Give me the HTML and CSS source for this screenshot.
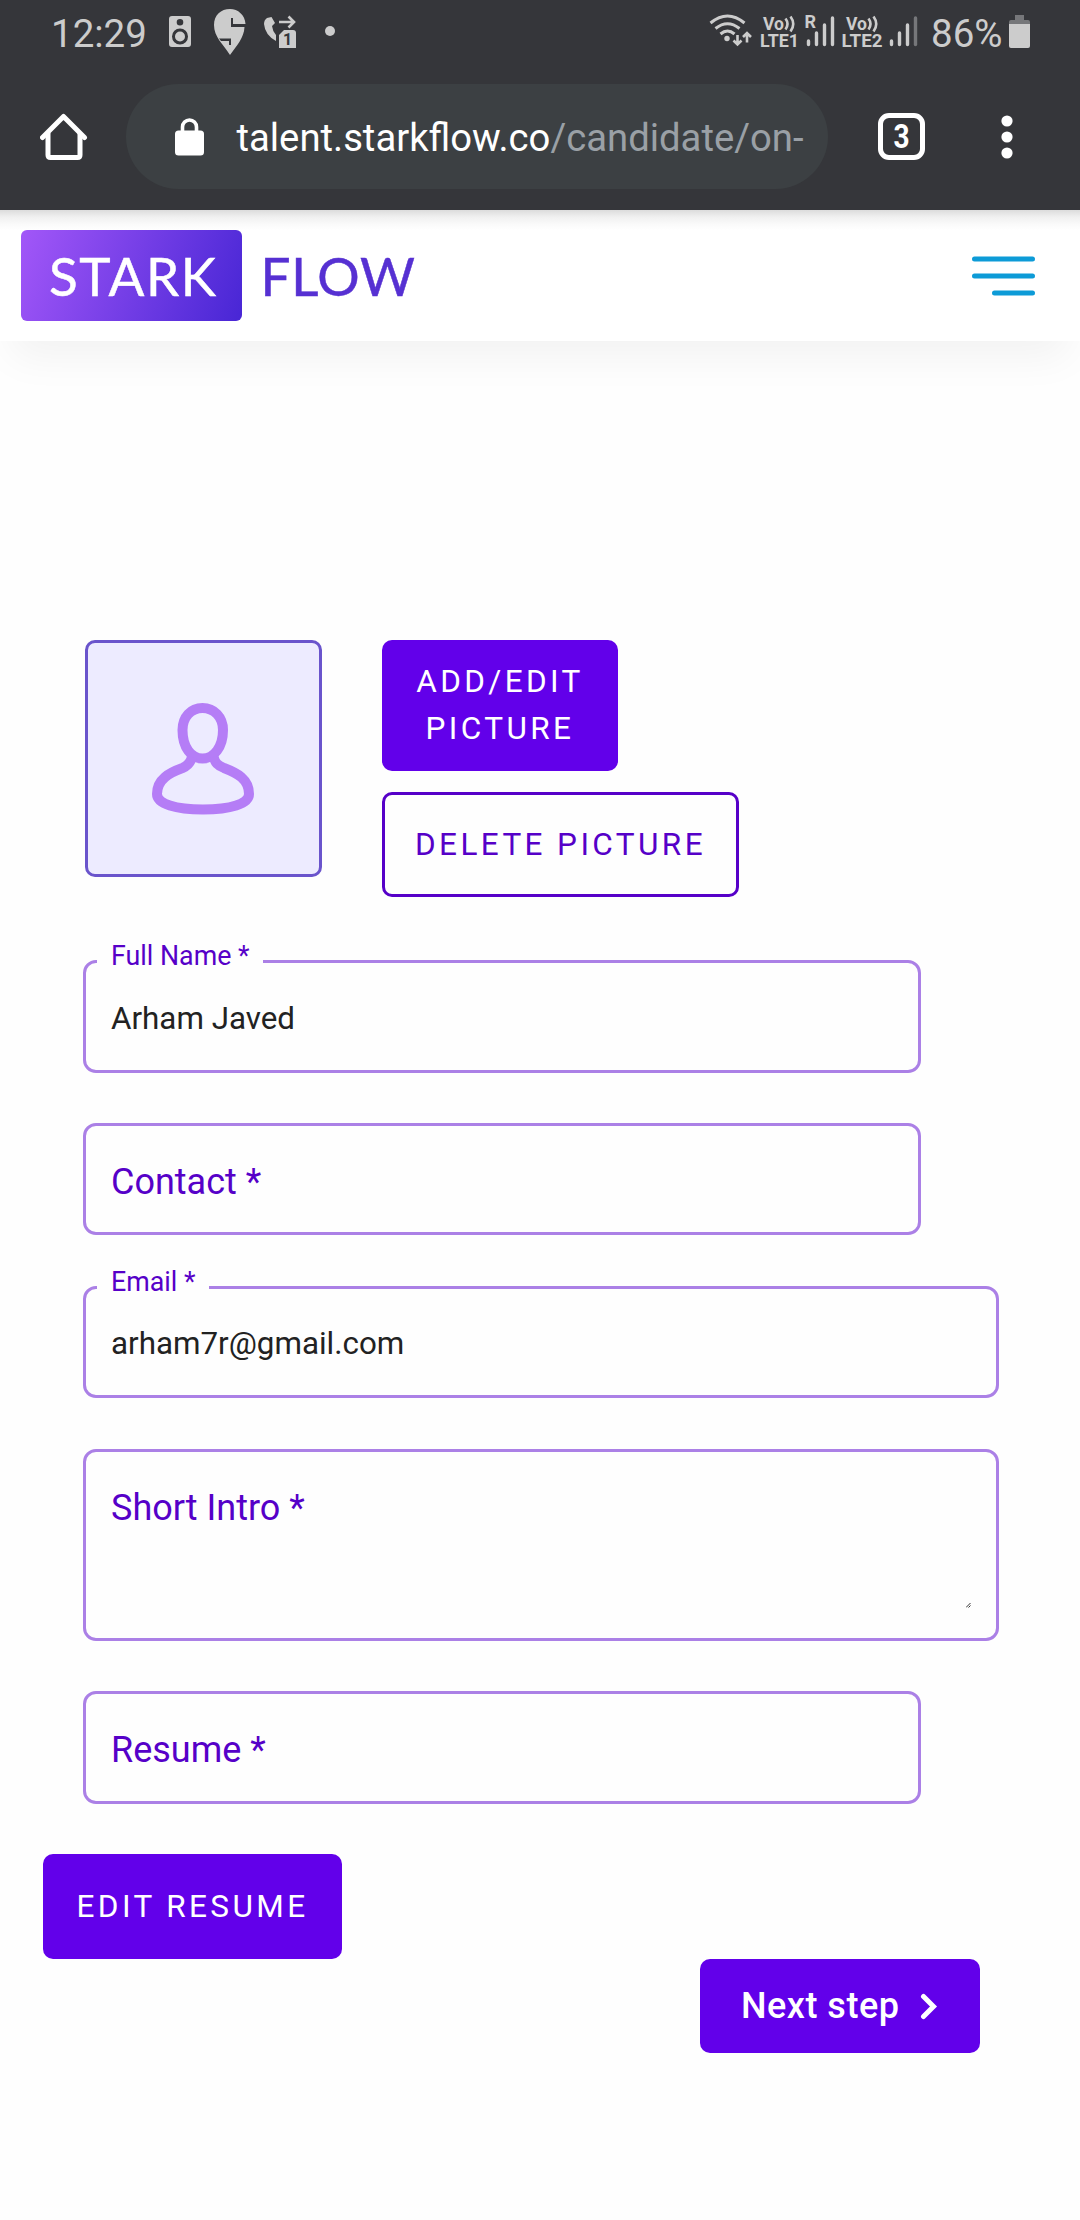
FILE: index.html
```html
<!DOCTYPE html>
<html lang="en">
<head>
<meta charset="utf-8">
<title>Starkflow</title>
<link rel="stylesheet" href="styles.css">
</head>
<body>
<header class="chrome">
  <div class="status">
    <span class="clock">12:29</span>
    <svg class="status-left" width="180" height="66" viewBox="160 0 180 66" fill="#ccc">
      <path fill-rule="evenodd" d="M172 16h16q3 0 3 3v25q0 3-3 3h-16q-3 0-3-3v-25q0-3 3-3zM180 19a3.300 3.300 0 1 0 0 6.600a3.300 3.300 0 1 0 0-6.600zM180 28.500a8 8 0 1 0 0 16a8 8 0 1 0 0-16z"/>
      <circle cx="180" cy="36.500" r="5"/>
      <path d="M230 55C223 44 214 37 214 25C214 15 221 9 230 9C238 9 245 15 245.500 24H233V18H231V27H244.500C244 38 237 45 230 55z"/>
      <path d="M219 38.500H231V45H229V41H221z" fill="#35363a"/>
      <path d="M267 18L271.500 17L275 23L272 26Q272.500 31 276 35V41Q265 35 264 24Q264 20 267 18z"/>
      <path d="M279 22H293M288.500 16.500L294 22L288.500 27.500" fill="none" stroke="#ccc" stroke-width="2.600"/>
      <path d="M284 30H293Q296 30 296 33V48H279V35z"/>
      <text x="287.500" y="45" class="sim" text-anchor="middle">1</text>
      <circle cx="330" cy="31" r="5"/>
    </svg>
    <svg class="status-right" width="220" height="66" viewBox="705 0 220 66" fill="#ccc">
      <g fill="none" stroke="#ccc" stroke-width="3">
        <path d="M710.500 23Q727.500 9 744.500 23M715.500 28.500Q727.500 19 739.500 28.500M720.500 34Q727.500 28 734.500 34"/>
        <path d="M737.500 35V44M733.500 40.500L737.500 44.500L741.500 40.500M747 42.500V33.500M743 37L747 33L751 37" stroke-width="2.600"/>
      </g>
      <circle cx="727" cy="38.500" r="2.700"/>
      <g class="lte">
        <text x="763" y="29.500" textLength="21" lengthAdjust="spacingAndGlyphs">Vo</text><text x="760" y="47" textLength="39" lengthAdjust="spacingAndGlyphs">LTE1</text>
        <text x="804.500" y="28">R</text>
        <text x="846" y="29.500" textLength="21" lengthAdjust="spacingAndGlyphs">Vo</text><text x="841.500" y="47" textLength="41" lengthAdjust="spacingAndGlyphs">LTE2</text>
      </g>
      <path d="M785.500 18.500Q789.500 24 785.500 29.500M790.500 16.500Q796 24 790.500 31.500M868.500 18.500Q872.500 24 868.500 29.500M873.500 16.500Q879 24 873.500 31.500" fill="none" stroke="#ccc" stroke-width="2.600"/>
      <path d="M808.500 41V44.500M816.500 33V44.500M824.500 25V44.500M832.500 18V44.500M891.500 41V44.500M899.500 33V44.500M907.500 25V44.500" stroke="#ccc" stroke-width="3.400" stroke-linecap="round"/>
      <path d="M915.500 18V44.500" stroke="#76777a" stroke-width="3.400" stroke-linecap="round"/>
    </svg>
    <span class="battery-text">86%</span>
    <svg class="battery" width="21" height="66" viewBox="0 0 21 66"><path d="M6 15h9v5h4q2 0 2 2v2H0v-2q0-2 2-2h4z" fill="#76777a"/><path d="M0 24h21v22q0 2-2 2H2q-2 0-2-2z" fill="#ccc"/></svg>
  </div>
  <div class="toolbar">
    <svg class="home" width="48" height="48" viewBox="0 0 48 48" fill="none" stroke="#fff" stroke-width="5" stroke-linejoin="round"><path d="M8 20V42q0 2.500 2.500 2.500h27q2.500 0 2.500-2.500V20"/><path d="M2.500 24.500L23.500 3.500L44.500 24.500" stroke-linecap="round"/></svg>
    <div class="url">
      <svg width="29" height="38" viewBox="0 0 29 38"><rect y="12.500" width="29" height="25" rx="3.500" fill="#fff"/><path d="M7.500 14V9a7 7 0 0 1 14 0V14" fill="none" stroke="#fff" stroke-width="3.600"/></svg>
      <span class="address">talent.starkflow.co<span class="path">/candidate/on-</span></span>
    </div>
    <span class="tabs"><span class="count">3</span></span>
    <svg class="dots" width="12" height="44" viewBox="0 0 12 44" fill="#fff"><circle cx="6" cy="6" r="5.600"/><circle cx="6" cy="22" r="5.600"/><circle cx="6" cy="38" r="5.600"/></svg>
  </div>
</header>
<nav class="nav">
  <div class="logo"><span class="stark">STARK</span><span class="flow">FLOW</span></div>
  <svg class="burger" width="63" height="40" viewBox="0 0 63 40" stroke="#0d9bd7" stroke-width="5" stroke-linecap="round"><path d="M2.500 3H60.500M2.500 20H60.500M22.500 37H60.500"/></svg>
</nav>
<main class="page">
  <section class="picture">
    <div class="avatar">
      <svg width="102" height="112" viewBox="0 0 102 112" fill="none" stroke="#b57df6" stroke-width="10"><path d="M50.500 5C62 5 71 14 71 27C71 44 62 55.500 50.500 55.500C39 55.500 30.500 44 30.500 27C30.500 14 39 5 50.500 5z"/><path d="M40 54Q38 62 30.500 65C18 69.500 5 76 5 91C5 101 24 106.500 51 106.500C78 106.500 97 101 97 91C97 76 85 70 72 65C65 62 63.500 60 61.500 54"/></svg>
    </div>
    <div class="actions">
      <button class="btn add">ADD/EDIT<br>PICTURE</button>
      <button class="btn outline">DELETE PICTURE</button>
    </div>
  </section>
  <form class="form">
    <div class="field narrow"><label class="notch">Full Name *</label><span class="value">Arham Javed</span></div>
    <div class="field narrow contact"><label class="placeholder">Contact *</label></div>
    <div class="field email"><label class="notch">Email *</label><span class="value">arham7r@gmail.com</span></div>
    <div class="field intro"><label class="placeholder">Short Intro *</label><svg class="grip" width="5" height="5" viewBox="0 0 5 5" stroke="#333" stroke-width="1"><path d="M0 4.500L4.500 0M2.500 4.500L4.500 2.500"/></svg></div>
    <div class="field narrow resume"><label class="placeholder">Resume *</label></div>
  </form>
  <button class="btn edit">EDIT RESUME</button>
  <button class="next">Next step<svg width="18" height="27" viewBox="0 0 18 27" fill="none" stroke="#fff" stroke-width="5" stroke-linecap="round"><path d="M3.500 3.500L13.500 13.500L3.500 23.500"/></svg></button>
</main>
</body>
</html>
```
FILE: styles.css
```css
* { box-sizing: border-box; }
body {
  margin: 0;
  width: 1080px;
  height: 2220px;
  overflow: hidden;
  background: #fefefe;
  font-family: Roboto, "Liberation Sans", sans-serif;
}
svg { display: block; flex: none; }

.chrome { height: 210px; background: #35363a; }
.status { display: flex; height: 66px; color: #ccc; font-size: 38.500px; line-height: 68px; white-space: nowrap; }
.clock { width: 109px; margin-left: 51px; }
.status-right { margin-left: 365px; }
.battery-text { width: 78px; margin-left: 6px; }
.sim { font-size: 16px; font-weight: 700; fill: #35363a; }
.lte { font-size: 18px; font-weight: 700; }

.toolbar { display: flex; align-items: center; height: 141px; }
.home { margin-left: 39.500px; }
.url {
  display: flex;
  align-items: center;
  width: 702px;
  height: 105px;
  margin-left: 38px;
  padding-left: 49px;
  border-radius: 53px;
  background: #3c4043;
}
.address { margin-left: 33px; padding-top: 3px; color: #fff; font-size: 38.250px; white-space: nowrap; }
.path { color: #9aa0a6; }
.tabs {
  display: flex;
  align-items: center;
  justify-content: center;
  width: 47px;
  height: 47px;
  margin-left: 50px;
  border: 5px solid #fff;
  border-radius: 11px;
  color: #fff;
  font-size: 33px;
  font-weight: 700;
  line-height: 37px;
}
.count { transform: scaleX(.85); }
.dots { margin-left: 76px; }

.nav {
  display: flex;
  align-items: center;
  justify-content: space-between;
  height: 131px;
  padding: 0 45px 0 21px;
  background: linear-gradient(#dcdcdc, #f0f0f0 7px, #fafafa 14px, #fff 20px);
  box-shadow: 0 28px 42px -12px rgba(0, 0, 0, .05);
}
.logo {
  display: flex;
  align-items: center;
  font-family: Lato, sans-serif;
  font-size: 53px;
  line-height: 92px;
  letter-spacing: 1.600px;
  white-space: nowrap;
  -webkit-text-stroke: .5px currentColor;
}
.stark {
  width: 221px;
  height: 91px;
  padding-left: 28px;
  border-radius: 6px;
  background: linear-gradient(110deg, #a257f8, #4826d5);
  color: #fff;
}
.flow { margin-left: 18.500px; color: #5630d2; letter-spacing: .7px; }

.page { display: flex; flex-direction: column; padding-top: 299px; }
.picture { display: flex; gap: 60px; height: 320px; padding-left: 85px; }
.avatar {
  display: flex;
  align-items: center;
  justify-content: center;
  width: 237px;
  height: 237px;
  padding-right: 2px;
  border: 3px solid #6a54cc;
  border-radius: 10px;
  background: #edebff;
}
.actions { display: flex; flex-direction: column; align-items: flex-start; gap: 21px; }
.btn {
  margin: 0;
  padding: 0;
  border: 0;
  border-radius: 10px;
  background: #6200ea;
  color: #fff;
  font-family: inherit;
  font-size: 31.500px;
  line-height: 47px;
  letter-spacing: 3.400px;
}
.add { width: 236px; height: 131px; padding-bottom: 2px; }
.outline { width: 357px; height: 105px; border: 3px solid #5600c8; background: transparent; color: #5600c8; }

.form { display: flex; flex-direction: column; padding-left: 83px; }
.field {
  display: flex;
  align-items: center;
  position: relative;
  width: 916px;
  height: 113px;
  padding-left: 25px;
  border: 3px solid #ab80e6;
  border-radius: 13px;
}
.narrow { width: 838px; }
.contact { height: 112px; margin-top: 50px; }
.email { height: 112px; margin-top: 51px; }
.intro { height: 192px; margin-top: 51px; align-items: flex-start; padding-top: 35px; }
.resume { margin-top: 50px; }
.notch {
  position: absolute;
  left: 11px;
  top: -23px;
  padding: 0 13px 0 14px;
  background: #fefefe;
  color: #5600c8;
  font-size: 26.800px;
  line-height: 32px;
}
.value { padding-top: 3px; color: #222; font-size: 31.350px; }
.placeholder { color: #5600c8; font-size: 36px; line-height: 42px; }
.contact .placeholder, .resume .placeholder { padding-top: 5px; }
.grip { position: absolute; right: 25px; bottom: 30px; }
.edit { width: 299px; height: 105px; margin: 50px 0 0 43px; }
.next {
  display: flex;
  align-items: center;
  align-self: flex-end;
  gap: 21px;
  width: 280px;
  height: 94px;
  margin-right: 100px;
  padding: 0 0 0 41px;
  border: 0;
  border-radius: 10px;
  background: #6200ea;
  color: #fff;
  font: 500 36px Roboto, sans-serif;
  letter-spacing: .5px;
}
```
